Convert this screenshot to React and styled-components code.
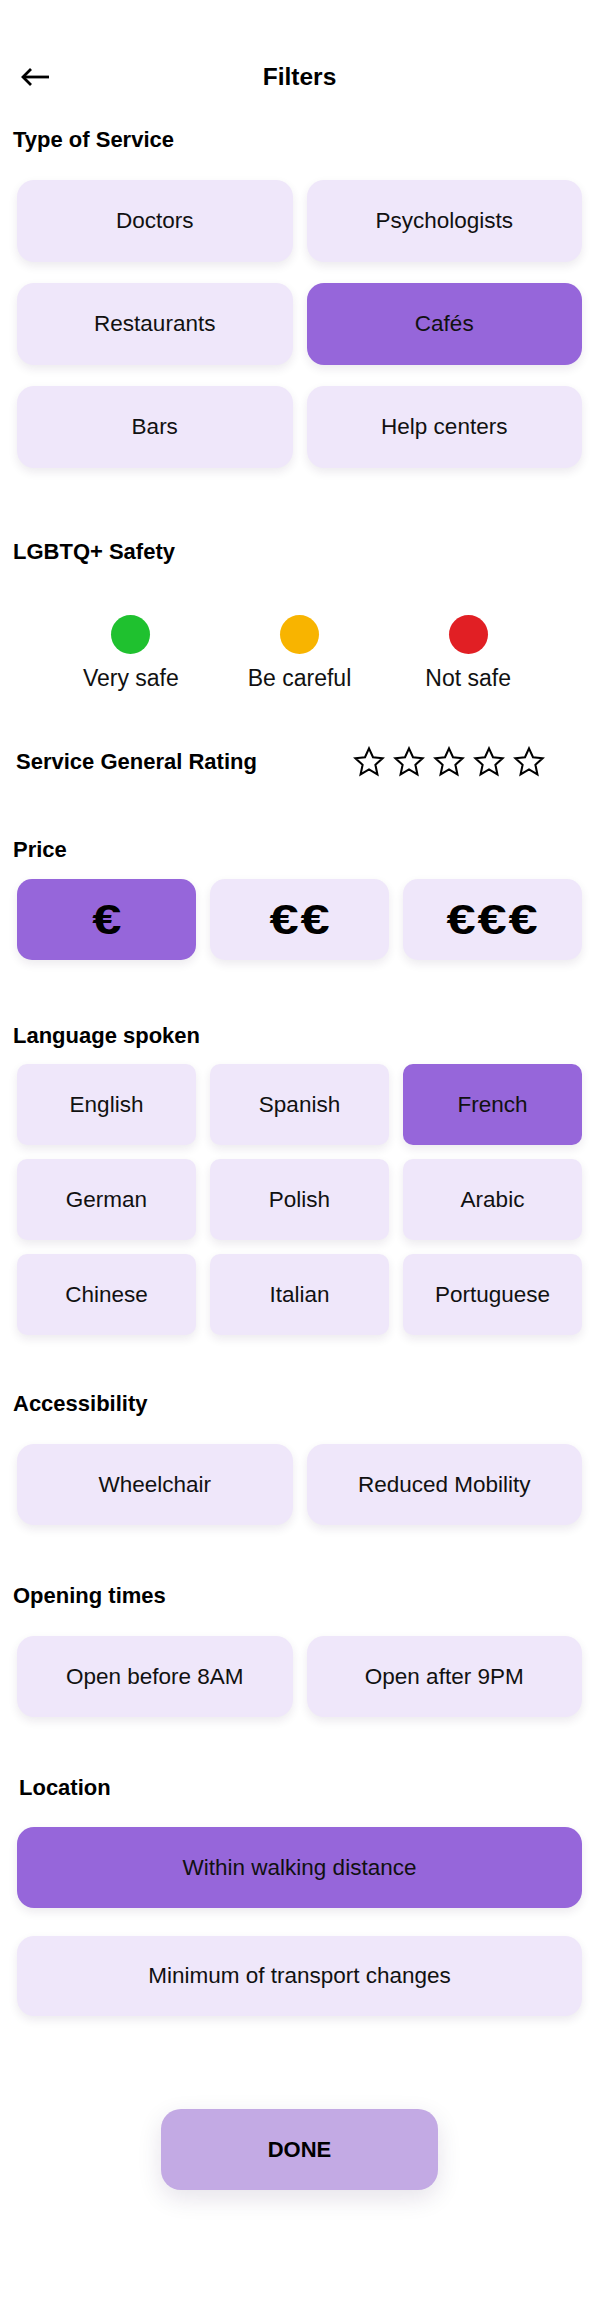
import React from "react";
import styled, { createGlobalStyle } from "styled-components";

const GlobalStyle = createGlobalStyle`
  html, body {
    margin: 0;
    padding: 0;
    background: #ffffff;
  }
  body {
    font-family: "Liberation Sans", Arial, sans-serif;
    color: #000;
  }
  * { box-sizing: border-box; }
`;

const Page = styled.div`
  width: 600px;
  min-height: 2320px;
  padding: 57px 18px 130px 17px;
  background: #fff;
`;

const Header = styled.header`
  display: grid;
  grid-template-columns: 1fr auto 1fr;
  align-items: center;
  height: 40px;
`;

const BackButton = styled.button`
  justify-self: start;
  margin-left: 3px;
  padding: 0;
  border: none;
  background: transparent;
  display: flex;
  align-items: center;
  cursor: pointer;
`;

const PageTitle = styled.h1`
  margin: 0;
  font-size: 24.5px;
  line-height: 28px;
  font-weight: 700;
  color: #000;
`;

const SectionTitle = styled.h2`
  margin: ${(p) => p.$mt}px 0 ${(p) => p.$mb}px ${(p) => p.$indent}px;
  font-size: 22px;
  line-height: 24px;
  font-weight: 700;
  color: #000;
`;

const OptionGrid = styled.div`
  display: grid;
  grid-template-columns: repeat(${(p) => p.$cols}, 1fr);
  column-gap: 14px;
  row-gap: ${(p) => p.$rowGap}px;
`;

const OptionButton = styled.button`
  height: ${(p) => p.$h || 82}px;
  border: none;
  border-radius: ${(p) => p.$radius}px;
  background: ${(p) => (p.$selected ? "#9666da" : "#efe7fa")};
  box-shadow: 0 4px 10px rgba(40, 20, 70, 0.09);
  display: flex;
  align-items: center;
  justify-content: center;
  font-family: "Liberation Sans", Arial, sans-serif;
  font-size: 22.5px;
  font-weight: 400;
  color: #111;
  padding: 0;
  cursor: pointer;
`;

const PriceText = styled.span`
  font-family: "Liberation Sans", Arial, sans-serif;
  font-weight: 700;
  font-size: 43px;
  line-height: 1;
  letter-spacing: 1.5px;
  margin-right: -1.5px;
  color: #000;
  display: inline-block;
  transform: scaleX(1.22);
`;

const SafetyGrid = styled.div`
  width: 506px;
  margin: 51px auto 0;
  display: grid;
  grid-template-columns: repeat(3, 1fr);
`;

const SafetyItem = styled.div`
  display: flex;
  flex-direction: column;
  align-items: center;
  gap: 11px;
`;

const Dot = styled.span`
  width: 39px;
  height: 39px;
  border-radius: 50%;
  background: ${(p) => p.$color};
  display: block;
`;

const SafetyLabel = styled.span`
  font-family: "Liberation Sans", Arial, sans-serif;
  font-size: 23px;
  line-height: 26px;
  color: #111;
`;

const RatingRow = styled.div`
  margin-top: 55px;
  height: 32px;
  display: flex;
  align-items: center;
  justify-content: space-between;
  padding-right: 37px;
`;

const RatingLabel = styled.span`
  font-size: 22px;
  font-weight: 700;
  color: #000;
  margin-left: -1px;
`;

const Stars = styled.div`
  display: flex;
  gap: 8px;
`;

const DoneWrap = styled.div`
  display: flex;
  justify-content: center;
  margin-top: 93px;
`;

const DoneButton = styled.button`
  width: 277px;
  height: 81px;
  border: none;
  border-radius: 20px;
  background: #c3aae4;
  box-shadow: 0 8px 24px rgba(40, 20, 70, 0.12);
  font-family: "Liberation Sans", Arial, sans-serif;
  font-size: 22px;
  font-weight: 700;
  color: #000;
  cursor: pointer;
`;

const Stack = styled.div`
  display: flex;
  flex-direction: column;
  gap: ${(p) => p.$gap}px;
`;

const BackArrow = () => (
  <svg width="30" height="20" viewBox="0 0 30 20" fill="none">
    <path d="M3 10 H29" stroke="#000" strokeWidth="2.8" />
    <path d="M11 2 L3 10 L11 18" stroke="#000" strokeWidth="2.8" strokeLinejoin="miter" />
  </svg>
);

const Star = () => (
  <svg width="32" height="32" viewBox="0 0 24 24" fill="none">
    <polygon
      points="12,1.8 15,8.4 22.2,9.2 16.8,14.1 18.3,21.3 12,17.6 5.7,21.3 7.2,14.1 1.8,9.2 9,8.4"
      stroke="#000"
      strokeWidth="1.55"
      strokeLinejoin="miter"
    />
  </svg>
);

const services = [
  ["Doctors", false],
  ["Psychologists", false],
  ["Restaurants", false],
  ["Cafés", true],
  ["Bars", false],
  ["Help centers", false],
];

const prices = [
  ["€", true],
  ["€€", false],
  ["€€€", false],
];

const languages = [
  ["English", false],
  ["Spanish", false],
  ["French", true],
  ["German", false],
  ["Polish", false],
  ["Arabic", false],
  ["Chinese", false],
  ["Italian", false],
  ["Portuguese", false],
];

const safety = [
  ["Very safe", "#1fc12f"],
  ["Be careful", "#f8b400"],
  ["Not safe", "#e11f24"],
];

export default function App() {
  return (
    <>
      <GlobalStyle />
      <Page>
        <Header>
          <BackButton aria-label="Back">
            <BackArrow />
          </BackButton>
          <PageTitle>Filters</PageTitle>
          <span />
        </Header>

        <SectionTitle $mt={31} $mb={28} $indent={-4}>Type of Service</SectionTitle>
        <OptionGrid $cols={2} $rowGap={21}>
          {services.map(([label, sel]) => (
            <OptionButton key={label} $selected={sel} $radius={17}>
              {label}
            </OptionButton>
          ))}
        </OptionGrid>

        <SectionTitle $mt={72} $mb={0} $indent={-4}>LGBTQ+ Safety</SectionTitle>
        <SafetyGrid>
          {safety.map(([label, color]) => (
            <SafetyItem key={label}>
              <Dot $color={color} />
              <SafetyLabel>{label}</SafetyLabel>
            </SafetyItem>
          ))}
        </SafetyGrid>

        <RatingRow>
          <RatingLabel>Service General Rating</RatingLabel>
          <Stars>
            {[0, 1, 2, 3, 4].map((i) => (
              <Star key={i} />
            ))}
          </Stars>
        </RatingRow>

        <SectionTitle $mt={60} $mb={17} $indent={-4}>Price</SectionTitle>
        <OptionGrid $cols={3} $rowGap={0}>
          {prices.map(([label, sel]) => (
            <OptionButton key={label} $selected={sel} $radius={15} $h={81}>
              <PriceText>{label}</PriceText>
            </OptionButton>
          ))}
        </OptionGrid>

        <SectionTitle $mt={64} $mb={16} $indent={-4}>Language spoken</SectionTitle>
        <OptionGrid $cols={3} $rowGap={14}>
          {languages.map(([label, sel]) => (
            <OptionButton key={label} $selected={sel} $radius={10} $h={81}>
              {label}
            </OptionButton>
          ))}
        </OptionGrid>

        <SectionTitle $mt={57} $mb={28} $indent={-4}>Accessibility</SectionTitle>
        <OptionGrid $cols={2} $rowGap={0}>
          <OptionButton $radius={17} $h={81}>Wheelchair</OptionButton>
          <OptionButton $radius={17} $h={81}>Reduced Mobility</OptionButton>
        </OptionGrid>

        <SectionTitle $mt={59} $mb={28} $indent={-4}>Opening times</SectionTitle>
        <OptionGrid $cols={2} $rowGap={0}>
          <OptionButton $radius={17} $h={81}>Open before 8AM</OptionButton>
          <OptionButton $radius={17} $h={81}>Open after 9PM</OptionButton>
        </OptionGrid>

        <SectionTitle $mt={59} $mb={27} $indent={2}>Location</SectionTitle>
        <Stack $gap={28}>
          <OptionButton $selected $radius={17} $h={81}>Within walking distance</OptionButton>
          <OptionButton $radius={17} $h={80}>Minimum of transport changes</OptionButton>
        </Stack>

        <DoneWrap>
          <DoneButton>DONE</DoneButton>
        </DoneWrap>
      </Page>
    </>
  );
}
